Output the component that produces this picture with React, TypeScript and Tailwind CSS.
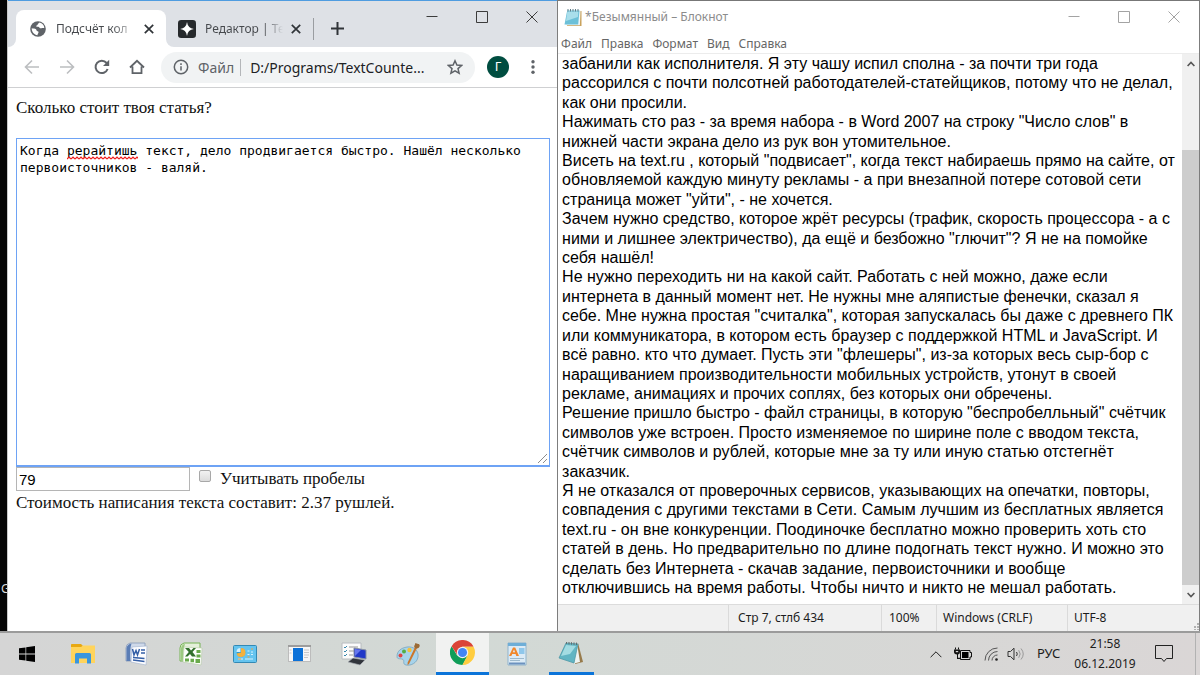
import { useState } from "react";

const paragraphs = [
  [
    "забанили как исполнителя. Я эту чашу испил сполна - за почти три года",
    "рассорился с почти полсотней работодателей-статейщиков, потому что не делал,",
    "как они просили.",
  ],
  [
    'Нажимать сто раз - за время набора - в Word 2007 на строку "Число слов" в',
    "нижней части экрана дело из рук вон утомительное.",
  ],
  [
    'Висеть на text.ru , который "подвисает", когда текст набираешь прямо на сайте, от',
    "обновляемой каждую минуту рекламы - а при внезапной потере сотовой сети",
    'страница может "уйти", - не хочется.',
  ],
  [
    "Зачем нужно средство, которое жрёт ресурсы (трафик, скорость процессора - а с",
    'ними и лишнее электричество), да ещё и безбожно "глючит"? Я не на помойке',
    "себя нашёл!",
  ],
  [
    "Не нужно переходить ни на какой сайт. Работать с ней можно, даже если",
    "интернета в данный момент нет. Не нужны мне аляпистые фенечки, сказал я",
    'себе. Мне нужна простая "считалка", которая запускалась бы даже с древнего ПК',
    "или коммуникатора, в котором есть браузер с поддержкой HTML и JavaScript. И",
    'всё равно. кто что думает. Пусть эти "флешеры", из-за которых весь сыр-бор с',
    "наращиванием производительности мобильных устройств, утонут в своей",
    "рекламе, анимациях и прочих соплях, без которых они обречены.",
  ],
  [
    'Решение пришло быстро - файл страницы, в которую "беспробелльный" счётчик',
    "символов уже встроен. Просто изменяемое по ширине поле с вводом текста,",
    "счётчик символов и рублей, которые мне за ту или иную статью отстегнёт",
    "заказчик.",
  ],
  [
    "Я не отказался от проверочных сервисов, указывающих на опечатки, повторы,",
    "совпадения с другими текстами в Сети. Самым лучшим из бесплатных является",
    "text.ru - он вне конкуренции. Поодиночке бесплатно можно проверить хоть сто",
    "статей в день. Но предварительно по длине подогнать текст нужно. И можно это",
    "сделать без Интернета - скачав задание, первоисточники и вообще",
    "отключившись на время работы. Чтобы ничто и никто не мешал работать.",
  ],
];

function WindowButtons(props: { color: string }) {
  return (
    <div className={"flex items-start " + props.color}>
      <button aria-label="Свернуть" className="flex h-8 w-[50px] items-center justify-center">
        <svg width="12" height="12" viewBox="0 0 12 12" stroke="currentColor">
          <path d="M.5 5.5h11" />
        </svg>
      </button>
      <button aria-label="Развернуть" className="flex h-8 w-[50px] items-center justify-center">
        <svg width="12" height="12" viewBox="0 0 12 12" stroke="currentColor" fill="none">
          <path d="M.5 .5h11v11h-11z" />
        </svg>
      </button>
      <button aria-label="Закрыть" className="flex h-8 w-[50px] items-center justify-center">
        <svg width="12" height="12" viewBox="0 0 12 12" stroke="currentColor">
          <path d="M.5 .5l11 11M11.5 .5l-11 11" />
        </svg>
      </button>
    </div>
  );
}

function CloseTab() {
  return (
    <button aria-label="Закрыть вкладку" className="text-[#303438]">
      <svg width="10" height="10" viewBox="0 0 10 10" stroke="currentColor" strokeWidth="1.7">
        <path d="M.8 .8l8.4 8.4M9.2 .8L.8 9.2" />
      </svg>
    </button>
  );
}

function TabStrip() {
  return (
    <div className="flex h-[47px] justify-between border-t border-[#4f9ce0] bg-[#dee1e6]">
      <div className="flex items-end">
        <div className="h-3 w-2 bg-white">
          <div className="h-3 w-2 rounded-br-lg bg-[#dee1e6]" />
        </div>
        <div className="flex h-[37px] w-[150px] items-center rounded-t-lg bg-white pl-[14px]">
          <svg width="16" height="16" viewBox="0 0 16 16" className="shrink-0">
            <circle cx="8" cy="8" r="7.8" fill="#5f6368" />
            <path d="M9.5 1.6c-.5.8-1.9 1-1.8 2 .1.8-1.4.7-1.4 1.6 0 .8 1.1.6 2 .6.9.1 1 1.2 1.9 1.4 1 .2 1.5-.5 2.4-.2.8.2 1.4.1 1.7 0 0-2.7-2-4.7-4.800-5.400z" fill="#fff" />
            <path d="M1.7 7.3c1.3.3 3.3.1 4.3 1 .9.9.3 1.7 1.6 2 1.2.2 1.1.9.7 1.7-.3.7-.8 1-.8 2.200-3.200-.2-5.900-3.200-5.800-6.900z" fill="#fff" />
          </svg>
          <span className="ml-[10px] w-[80px] bg-linear-to-r from-[#45484c] from-70% to-white bg-clip-text text-[12px] whitespace-nowrap text-transparent">
            Подсчёт кол
          </span>
          <span className="ml-2 flex items-center">
            <CloseTab />
          </span>
        </div>
        <div className="h-3 w-2 bg-white">
          <div className="h-3 w-2 rounded-bl-lg bg-[#dee1e6]" />
        </div>
        <div className="flex h-[37px] items-center pl-1">
          <svg width="18" height="18" viewBox="0 0 17 17" className="shrink-0">
            <rect width="17" height="17" rx="3" fill="#26292c" />
            <path d="M8.5 2q.7 5.800 6.500 6.500q-5.800.7-6.500 6.500q-.7-5.800-6.500-6.500q5.800-.7 6.500-6.500z" fill="#fff" />
          </svg>
          <span className="ml-[9px] w-[78px] bg-linear-to-r from-[#45484c] from-75% to-[#dee1e6] bg-clip-text text-[12px] whitespace-nowrap text-transparent">
            Редактор | Те
          </span>
          <span className="ml-2 flex items-center">
            <CloseTab />
          </span>
          <span className="ml-3 h-[22px] w-px bg-[#9a9da1]" />
          <button aria-label="Новая вкладка" className="ml-[17px] text-[#303438]">
            <svg width="13" height="13" viewBox="0 0 13 13" stroke="currentColor" strokeWidth="2">
              <path d="M6.500 0v13M0 6.500h13" />
            </svg>
          </button>
        </div>
      </div>
      <WindowButtons color="text-[#3c3c3c]" />
    </div>
  );
}

function Toolbar() {
  return (
    <div className="flex h-[41px] items-center border-b border-[#cfd0d2] bg-white pr-[22px] pl-4 text-[#5f6368]">
      <div className="flex gap-[19px]">
        <button aria-label="Назад" className="text-[#bcbec0]">
          <svg width="16" height="16" viewBox="0 0 16 16" fill="none" stroke="currentColor" strokeWidth="1.6">
            <path d="M15 8H2M8 1.500L1.500 8L8 14.500" />
          </svg>
        </button>
        <button aria-label="Вперёд" className="text-[#bcbec0]">
          <svg width="16" height="16" viewBox="0 0 16 16" fill="none" stroke="currentColor" strokeWidth="1.6">
            <path d="M1 8h13M8 1.500L14.500 8L8 14.500" />
          </svg>
        </button>
        <button aria-label="Обновить">
          <svg width="16" height="16" viewBox="0 0 16 16" fill="none" stroke="currentColor" strokeWidth="2">
            <path d="M13.600 10A6.200 6.200 0 1 1 12.600 4" />
            <path d="M15.200 .8V7H9z" fill="currentColor" stroke="none" />
          </svg>
        </button>
        <button aria-label="Главная">
          <svg width="16" height="16" viewBox="0 0 16 16" fill="none" stroke="currentColor" strokeWidth="1.8">
            <path d="M1 8.500L8 1.800L15 8.500M3.500 7.500v6.600h9V7.500" />
          </svg>
        </button>
      </div>
      <div className="ml-4 flex h-[31px] flex-1 items-center rounded-full bg-[#f1f3f4] px-3">
        <svg width="16" height="16" viewBox="0 0 16 16" fill="none" stroke="currentColor" strokeWidth="1.5" className="shrink-0">
          <circle cx="8" cy="8" r="6.7" />
          <path d="M8 7.200v4.300M8 4.300v1.700" />
        </svg>
        <label htmlFor="url" className="ml-[9px] text-[14px]">
          Файл
        </label>
        <span className="ml-[6px] h-[17px] w-px shrink-0 bg-[#b4b6b9]" />
        <input id="url" className="ml-[9px] w-0 flex-1 text-[14px] text-[#202124] outline-none" defaultValue="D:/Programs/TextCounte..." />
        <button aria-label="Добавить в закладки">
          <svg width="16" height="16" viewBox="0 0 16 16" fill="none" stroke="currentColor" strokeWidth="1.5">
            <path d="M8 1.800l1.900 4.300l4.700.4l-3.600 3.100l1.100 4.600L8 11.800l-4.100 2.400L5 9.600L1.400 6.500l4.700-.4z" />
          </svg>
        </button>
      </div>
      <button aria-label="Профиль" className="ml-3 flex size-[22px] items-center justify-center rounded-full bg-[#004d40] text-[13px] text-white">
        Г
      </button>
      <button aria-label="Меню" className="ml-[22px]">
        <svg width="4" height="14" viewBox="0 0 4 14" fill="currentColor">
          <circle cx="2" cy="1.8" r="1.7" />
          <circle cx="2" cy="7" r="1.7" />
          <circle cx="2" cy="12.2" r="1.7" />
        </svg>
      </button>
    </div>
  );
}

function CounterPage() {
  const [text, setText] = useState(
    "Когда рерайтишь текст, дело продвигается быстро. Нашёл несколько\nпервоисточников - валяй."
  );
  const [spaces, setSpaces] = useState(false);

  return (
    <div className="flex flex-1 flex-col bg-white pr-[7px] pl-2 font-['Liberation_Serif','Times_New_Roman',serif] text-[17px] leading-6 text-[#111]">
      <label htmlFor="article" className="mt-2">
        Сколько стоит твоя статья?
      </label>
      <div className="relative mt-[18px] flex">
        <textarea
          id="article"
          spellCheck={false}
          value={text}
          onChange={(e) => setText(e.target.value)}
          className="h-[329px] w-full resize-none border border-b-2 border-[#6ea3f5] px-[3px] py-[3px] font-['DejaVu_Sans_Mono','Liberation_Mono',monospace] text-[13px] leading-[17px] text-black outline-none"
        />
        {/* misspelled word underline */}
        <svg width="71" height="4" className="pointer-events-none absolute top-[18px] left-[51px]">
          <defs>
            <pattern id="wave" width="4" height="4" patternUnits="userSpaceOnUse">
              <path d="M0 3L2 1L4 3" fill="none" stroke="#f01818" strokeWidth="1.2" />
            </pattern>
          </defs>
          <rect width="71" height="4" fill="url(#wave)" />
        </svg>
        <svg width="10" height="10" className="pointer-events-none absolute right-[2px] bottom-[3px]" stroke="#8c8c8c">
          <path d="M0 9L9 0M5 9L9 5" />
        </svg>
      </div>
      <div className="flex items-start">
        <input
          aria-label="Количество символов"
          defaultValue="79"
          className="h-6 w-[174px] border border-[#b5b5b5] px-[2px] font-['Liberation_Sans',Arial,sans-serif] text-[15px] leading-5 text-black outline-none"
        />
        <input
          id="spaces"
          type="checkbox"
          checked={spaces}
          onChange={() => setSpaces(!spaces)}
          className="mt-[3px] ml-[9px] size-3 appearance-none rounded-xs border border-[#a8a8a8] bg-linear-to-b from-[#f2f2f2] to-[#dcdcdc] checked:bg-[#76a7f5]"
        />
        <label htmlFor="spaces" className="ml-[9px]">
          Учитывать пробелы
        </label>
      </div>
      <p>Стоимость написания текста составит: 2.37 рушлей.</p>
    </div>
  );
}

function NotepadIcon() {
  return (
    <svg width="18" height="19" viewBox="0 0 18 19">
      <path d="M3.500 3h14v15H3z" fill="#c9a25c" />
      <path d="M3.500 2.500h13l-.6 14.800H2z" fill="#eef6f8" />
      <path d="M3.200 2.500h12.300l-1.300 14H.5z" fill="#6cc0d8" />
      <path d="M3.400 3.500h11l-.5 5.500L2 13z" fill="#a9deeb" />
      <path d="M4 1v2.500M6.500 1v2.500M9 1v2.500M11.500 1v2.500M14 1v2.500" stroke="#5f7c86" />
    </svg>
  );
}

function Notepad() {
  const menu = ["Файл", "Правка", "Формат", "Вид", "Справка"];
  return (
    <section className="flex flex-[642] flex-col border-x border-t border-[#7d7d7d] border-t-[#777] bg-white">
      <div className="flex h-[33px] items-start justify-between">
        <div className="flex h-8 items-center pl-[6px] text-[12px] text-[#8c8c8c]">
          <NotepadIcon />
          <span className="ml-[3px]">*Безымянный – Блокнот</span>
        </div>
        <WindowButtons color="text-[#a3a3a3]" />
      </div>
      <nav className="flex h-5 items-center gap-[9px] border-b border-[#ececec] pl-[3px] text-[12px] text-[#666]">
        {menu.map((m) => (
          <button key={m}>{m}</button>
        ))}
      </nav>
      <div className="flex flex-1">
        <div
          role="textbox"
          aria-multiline="true"
          aria-label="Текст документа"
          contentEditable
          suppressContentEditableWarning
          className="flex flex-1 flex-col justify-between pb-[7px] pl-1 font-['Liberation_Sans',Arial,sans-serif] text-[16px] leading-[19px] whitespace-nowrap text-black outline-none"
        >
          {paragraphs.flat().map((line) => (
            <div key={line}>{line}</div>
          ))}
        </div>
        <div className="flex w-[17px] flex-col items-center bg-[#f0f0f0] text-[#555]">
          <button aria-label="Вверх" className="flex h-5 items-center">
            <svg width="8" height="6" viewBox="0 0 8 6" fill="none" stroke="currentColor" strokeWidth="1.6">
              <path d="M.6 5L4 1.400L7.400 5" />
            </svg>
          </button>
          <div className="mt-[76px] w-full flex-1 bg-[#cdcdcd]" />
          <button aria-label="Вниз" className="flex h-[19px] items-center">
            <svg width="8" height="6" viewBox="0 0 8 6" fill="none" stroke="currentColor" strokeWidth="1.6">
              <path d="M.6 1L4 4.600L7.400 1" />
            </svg>
          </button>
        </div>
      </div>
      <footer className="flex h-[27px] items-end justify-end border-t border-[#dcdcdc] bg-[#f0f0f0] text-[12px] leading-[26px] text-[#1c1c1c]">
        <span className="w-[153px] border-l border-[#dadada] pl-[9px]">Стр 7, стлб 434</span>
        <span className="w-[55px] border-l border-[#dadada] pl-[7px]">100%</span>
        <span className="w-[131px] border-l border-[#dadada] pl-[6px]">Windows (CRLF)</span>
        <span className="w-[125px] border-l border-[#dadada] pl-[6px]">UTF-8</span>
        <svg width="7" height="7" className="mb-px" fill="#b0b0b0">
          <path d="M5 0h2v2H5zM5 3h2v2H5zM2 3h2v2H2zM5 6h2v1H5zM2 6h2v1H2z" />
        </svg>
      </footer>
    </section>
  );
}

const apps = [
  {
    name: "Проводник",
    icon: (
      <svg width="24" height="22" viewBox="0 0 24 22">
        <path d="M0 1.500Q0 1 1 1h9l2 2h11v17H0z" fill="#e8a812" />
        <path d="M0 4h10l2-1.500h12V20H0z" fill="#ffd45c" />
        <path d="M4 20.500v-9q0-1.500 1.500-1.500h13q1.500 0 1.500 1.500v9h-4v-5H8v5z" fill="#3a96dd" />
      </svg>
    ),
  },
  {
    name: "Word",
    icon: (
      <svg width="24" height="24" viewBox="0 0 24 24">
        <path d="M5 1h15v18H1V6q0-4 4-5z" fill="#cfd9e9" stroke="#8699b8" strokeWidth=".8" />
        <path d="M1.500 19V6q1-4 5-4.500q-2 6-1 17.500z" fill="#5a7db5" />
        <path d="M7 5l15-1l-1 19l-15-3z" fill="#fdfdff" stroke="#9fb2cf" strokeWidth=".6" />
        <path d="M7.500 7l1.500 6l2-4.500l1.500 4.500l2-6M16 8h4M16 11h4M8 15.500l11.500 1M8 18l11.500 1.500" fill="none" stroke="#345fa6" strokeWidth="1.5" />
      </svg>
    ),
  },
  {
    name: "Excel",
    icon: (
      <svg width="24" height="24" viewBox="0 0 24 24">
        <path d="M5 1h16v18H1V6q0-4 4-5z" fill="#e4f0da" stroke="#76b455" />
        <path d="M2 19V6q1-4 4-4q-2 5-2 17z" fill="#9cc980" />
        <path d="M5 5l18 1l-1 17l-18-3z" fill="#fdfffb" stroke="#b3caa4" strokeWidth=".6" />
        <path d="M6 6h4l2 2.500L14.500 6h2.500L13.500 10l3.500 4.500h-4l-2-2.500L8.500 14.500H6l3.800-4.500z" fill="#32702c" />
        <path d="M17.500 8h4v3h-4zM17.500 12.500h4v3h-4zM6 16.500h4v3H6zM11.500 16.800H15v3.500h-3.500zM16.500 17H21v4h-4.500z" fill="#69aa4b" />
      </svg>
    ),
  },
  {
    name: "Панель управления",
    icon: (
      <svg width="24" height="18" viewBox="0 0 24 18">
        <rect x=".5" y=".5" width="23" height="17" rx="1" fill="#65c4ef" stroke="#3389b4" />
        <circle cx="8" cy="7.500" r="4.300" fill="#2f9ad0" />
        <path d="M8 7.500V3a4.500 4.500 0 1 1-4.400 5.500z" fill="#f4b13c" />
        <path d="M7.500 7V3a4.200 4.200 0 0 0-4 4z" fill="#d8f1fc" />
        <path d="M14.500 6h2M14.500 9.500h2M18 9.500h2M18 7h2M5 14h5M12 14h8" stroke="#d6f3ff" />
        <path d="M19 3v2M14.500 12h2M5 14h3" stroke="#f0a23d" />
      </svg>
    ),
  },
  {
    name: "Просмотр",
    icon: (
      <svg width="23" height="18" viewBox="0 0 23 18">
        <rect x=".5" y=".5" width="22" height="16" fill="#f6f6f6" stroke="#bcbcbc" />
        <path d="M0 0h23v2H0z" fill="#9c9c9c" />
        <path d="M5 3h10v13H5z" fill="#0b71d8" />
        <path d="M16 5h5M16 7.500h5M16 10h5M16 12.500h4M1.500 5h2M1.500 8h2" stroke="#c8c8c8" />
      </svg>
    ),
  },
  {
    name: "Удалённый рабочий стол",
    icon: (
      <svg width="26" height="24" viewBox="0 0 26 24">
        <path d="M1 1h19v16H1z" fill="#fbfbfb" stroke="#b8bcc0" />
        <path d="M3 5l1 1l2-2M3 9l1 1l2-2M3 13l1 1l2-2" fill="none" stroke="#3787ad" />
        <path d="M8 5h9M8 9h5M8 13h4" stroke="#999" />
        <path d="M13 6l12 2v9l-12-2z" fill="#2138c8" stroke="#8791a5" />
        <path d="M14 7l6 1l-6 6z" fill="#6577ef" />
        <path d="M12 16l12 2l-5 5L7 20z" fill="#31353b" stroke="#a9adb4" strokeWidth=".7" />
      </svg>
    ),
  },
  {
    name: "Paint",
    icon: (
      <svg width="24" height="25" viewBox="0 0 24 25">
        <path d="M11 5c7-1 12 4 11 10s-7 9-12 8c-4-1-1-4-3-5.500C5 16 1 18 1 14.500C1 9 5 6 11 5z" fill="#a7d3ea" stroke="#6f9eb9" strokeWidth=".7" />
        <circle cx="4.5" cy="13.5" r="2" fill="#dd4545" />
        <circle cx="8" cy="9.5" r="2" fill="#55ad45" />
        <circle cx="13.5" cy="8" r="2.2" fill="#f3c13b" />
        <path d="M20 3l2 1l-9 18l-1.500 1l.2-2.500z" fill="#cb7629" />
        <path d="M18.500 5.500c-1-2 1-2.500.7-4.500c2 1 4.500.5 4.500 2.500c0 2-2 3.500-3.700 3z" fill="#9b6a36" />
      </svg>
    ),
  },
  {
    name: "Chrome",
    icon: (
      <svg width="25" height="25" viewBox="0 0 48 48">
        <path d="M24 24L34 30L24 48A24 24 0 0 1 3.200 12L14 30z" fill="#0f9d58" />
        <path d="M24 13h20.500L44.800 12A24 24 0 0 0 3.200 12L14 29z" fill="#db4437" />
        <path d="M24 13h21.300A24 24 0 0 1 24 48l9.500-18.500z" fill="#ffcd40" />
        <circle cx="24" cy="24" r="11" fill="#f1f1f1" />
        <circle cx="24" cy="24" r="8.7" fill="#4285f4" />
      </svg>
    ),
  },
  {
    name: "WordPad",
    icon: (
      <svg width="20" height="24" viewBox="0 0 20 24">
        <path d="M1 1h18v22H1z" fill="#dcebf6" stroke="#8fb3cc" />
        <path d="M1 1h18v3H1z" fill="#6eaed7" />
        <path d="M2 14L6 5.500h2.200L12 14H9.300l-.7-2H5.200l-.8 2zM5.800 10.300h2.300L7 7.500z" fill="#f1872b" />
        <path d="M12 6h5.500v6H12z" fill="#8fc7eb" />
        <path d="M3 16.500h14M3 18.500h10" stroke="#9cb9cd" />
        <path d="M2 21.500h16" stroke="#6c92bf" strokeWidth="2" />
      </svg>
    ),
  },
  {
    name: "Блокнот",
    icon: (
      <svg width="26" height="24" viewBox="0 0 26 24">
        <path d="M20 2l5 19l-8 2z" fill="#977a4b" />
        <path d="M19 2l3 19l-6 1.500z" fill="#eef3f1" />
        <path d="M8 2l12 1l-4 19L1 17z" fill="#61b5c3" stroke="#4893a2" strokeWidth=".7" />
        <path d="M8 4l10 1l-6 8L3 15z" fill="#a3dce2" />
        <path d="M8.500 1v2M11 1v2.500M13.500 1.200v2.500M16 1.400v2.500M18.500 1.600v2.500" stroke="#626e70" />
      </svg>
    ),
  },
];

function Taskbar() {
  return (
    <footer className="flex h-11 items-center border-t-2 border-[#9b9b9b] bg-linear-to-r from-[#d5d5d5] via-[#d2d9d5] via-40% to-[#dad6d6] text-[#1d1d1d]">
      <button aria-label="Пуск" className="flex h-full w-[53px] items-center justify-center">
        <svg width="16" height="16" viewBox="0 0 16 16" fill="#000">
          <path d="M0 2.300L6.500 1.400V7.600H0zM7.200 1.300L16 0V7.600H7.200zM0 8.400H6.500V14.600L0 13.700zM7.200 8.400H16V16L7.200 14.700z" />
        </svg>
      </button>
      <div className="ml-[3px] flex h-full w-[542px] justify-between">
        {apps.map((app) => (
          <button
            key={app.name}
            aria-label={app.name}
            className={
              "flex w-[53px] flex-col items-center justify-between " + (app.name === "Chrome" ? "bg-[#f1f2f1]" : "")
            }
          >
            <span className="flex flex-1 items-center">{app.icon}</span>
            {app.name === "Chrome" && <span className="h-[3px] w-full bg-[#0b74d9]" />}
            {app.name === "Блокнот" && <span className="h-[3px] w-[45px] bg-[#0b74d9]" />}
          </button>
        ))}
      </div>
      <div className="ml-auto flex h-full items-center">
        <button aria-label="Показать скрытые значки">
          <svg width="12" height="7" viewBox="0 0 12 7" fill="none" stroke="currentColor">
            <path d="M.6 6.200L6 .8L11.400 6.200" />
          </svg>
        </button>
        <svg width="18" height="14" viewBox="0 0 18 14" className="ml-3">
          <path d="M6.500 3.500h9.500v2h1.500v4.500H16v2.500H6.500z" fill="none" stroke="#111" />
          <path d="M8 5h6.500v6H8z" fill="#000" />
          <path d="M0 2.500h6V5q0 2.200-2 2.600v3.200h2.500V12H3V7.600Q0 7.200 0 5z" fill="#111" />
          <path d="M1.500 .5v2M4.500 .5v2" stroke="#111" />
          <path d="M1.800 4h2.400v1.200h-2.400z" fill="#d8d6d6" />
        </svg>
        <svg width="15" height="15" viewBox="0 0 15 15" className="ml-3" fill="none" stroke="#555">
          <path d="M1 13.500A12.500 12.500 0 0 1 13.500 1M4.500 13.500a9 9 0 0 1 9-9M8 13.500A5.500 5.500 0 0 1 13.500 8" />
          <circle cx="12.5" cy="12.5" r="1.3" fill="#222" stroke="none" />
        </svg>
        <svg width="18" height="14" viewBox="0 0 18 14" className="ml-2" fill="none" stroke="#333">
          <path d="M1 4.500h2.500L7 1.200v11.600L3.500 9.500H1z" />
          <path d="M9.500 5q1.500 2 0 4" />
          <path d="M11.700 3.200q3 3.800 0 7.600M14 1.500q4.500 5.500 0 11" stroke="#999" />
        </svg>
        <span className="ml-[12px] w-[23px] text-[13px]">РУС</span>
        <div className="ml-[9px] w-[72px] text-center text-[12px] leading-5">
          <div>21:58</div>
          <div>06.12.2019</div>
        </div>
        <button aria-label="Центр уведомлений" className="mr-[22px] ml-[14px]">
          <svg width="18" height="18" viewBox="0 0 18 18" fill="none" stroke="#222">
            <path d="M.5 .5h17v13H11.500L9 16.500L6.500 13.500h-6z" />
          </svg>
        </button>
        <span className="mr-1 h-full w-px bg-[#b2b2b2]" />
      </div>
    </footer>
  );
}

function App() {
  return (
    <div className="flex min-h-screen flex-col bg-white font-['Noto_Sans','Open_Sans',sans-serif] text-[12px]">
      <main className="flex flex-1">
        <aside className="flex w-2 shrink-0 items-end overflow-hidden border-r border-[#c9c9c9] bg-[#050505] pb-[34px] pl-px text-[12px] leading-4 text-[#ddd]">
          G
        </aside>
        <section className="flex flex-[550] flex-col">
          <TabStrip />
          <Toolbar />
          <CounterPage />
        </section>
        <Notepad />
      </main>
      <Taskbar />
    </div>
  );
}

export default App;
